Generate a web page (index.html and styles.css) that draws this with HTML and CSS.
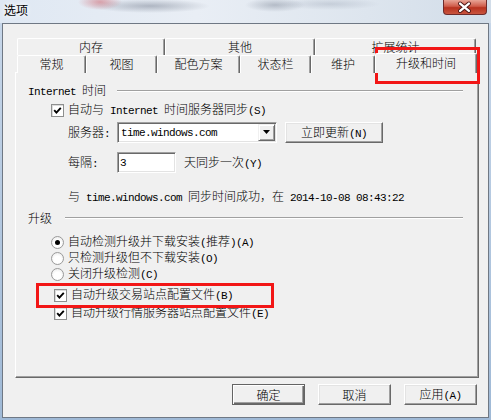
FILE: index.html
```html
<!DOCTYPE html>
<html lang="zh-CN">
<head>
    <meta charset="UTF-8">
    <title>选项</title>
    <link rel="stylesheet" href="styles.css">
</head>
<body>
<div class="window">
    <div class="titlebar">
        <span class="title">选项</span>
        <div class="close">
            <svg width="44" height="15" viewBox="0 0 44 15">
                <path d="M17.5 3.5 L26.5 11 M26.5 3.5 L17.5 11" stroke="#4a1414" stroke-width="4.2" stroke-linecap="round"/>
                <path d="M17.5 3.5 L26.5 11 M26.5 3.5 L17.5 11" stroke="#fff" stroke-width="2.4" stroke-linecap="round"/>
            </svg>
        </div>
    </div>

    <div class="frame">
        <div class="tabs">
            <div class="tabrow back">
                <div class="tab">内存</div>
                <div class="tab">其他</div>
                <div class="tab">扩展统计</div>
            </div>
            <div class="tabrow front">
                <div class="tab">常规</div>
                <div class="tab">视图</div>
                <div class="tab">配色方案</div>
                <div class="tab">状态栏</div>
                <div class="tab">维护</div>
                <div class="tab active">升级和时间</div>
            </div>
        </div>

        <div class="panel">
            <div class="group-head net">
                <span><span class="en">Internet </span>时间</span>
                <span class="rule"></span>
            </div>
            <div class="row sync-check">
                <span class="check"><svg width="11" height="11" viewBox="0 0 11 11"><path d="M2.2 5.2 L4.4 7.6 L8.8 2.8" fill="none" stroke="#000" stroke-width="1.9"/></svg></span>
                <span>自动与<span class="en"> Internet </span>时间服务器同步<span class="en">(S)</span></span>
            </div>
            <div class="row field server">
                <span class="field-label">服务器<span class="en">:</span></span>
                <div class="combo">
                    <span class="en combo-text">time.windows.com</span>
                    <span class="drop"><svg width="8" height="5" viewBox="0 0 8 5"><path d="M0 0 H7 L3.5 4 Z" fill="#000"/></svg></span>
                </div>
                <button class="btn update">立即更新<span class="en">(N)</span></button>
            </div>
            <div class="row field interval">
                <span class="field-label">每隔<span class="en">:</span></span>
                <div class="input"><span class="en">3</span></div>
                <span class="after">天同步一次<span class="en">(Y)</span></span>
            </div>
            <div class="row status">
                <span>与<span class="en"> time.windows.com </span>同步时间成功，在<span class="en"> 2014-10-08 08:43:22</span></span>
            </div>

            <div class="group-head up">
                <span>升级</span>
                <span class="rule"></span>
            </div>
            <div class="row opt first">
                <span class="radio on"></span>
                <span>自动检测升级并下载安装<span class="en">(</span>推荐<span class="en">)(A)</span></span>
            </div>
            <div class="row opt">
                <span class="radio"></span>
                <span>只检测升级但不下载安装<span class="en">(O)</span></span>
            </div>
            <div class="row opt">
                <span class="radio"></span>
                <span>关闭升级检测<span class="en">(C)</span></span>
            </div>
            <div class="row cfg first">
                <span class="check"><svg width="11" height="11" viewBox="0 0 11 11"><path d="M2.2 5.2 L4.4 7.6 L8.8 2.8" fill="none" stroke="#000" stroke-width="1.9"/></svg></span>
                <span>自动升级交易站点配置文件<span class="en">(B)</span></span>
            </div>
            <div class="row cfg second">
                <span class="check"><svg width="11" height="11" viewBox="0 0 11 11"><path d="M2.2 5.2 L4.4 7.6 L8.8 2.8" fill="none" stroke="#000" stroke-width="1.9"/></svg></span>
                <span>自动升级行情服务器站点配置文件<span class="en">(E)</span></span>
            </div>
        </div>

        <div class="footer">
            <button class="btn default">确定</button>
            <button class="btn">取消</button>
            <button class="btn">应用<span class="en">(A)</span></button>
        </div>

        <!-- red annotation boxes -->
        <div class="mark mark-tab"></div>
        <div class="mark mark-cfg"></div>
    </div>
</div>
</body>
</html>
```

FILE: styles.css
```css
* {
    box-sizing: border-box;
}
body {
    margin: 0;
    font: 300 12px/16px "Noto Sans CJK SC", "Liberation Sans", sans-serif;
    color: #000;
    background: #fff;
}
.en {
    font-family: "Liberation Mono", monospace;
    font-size: 11px;
    font-weight: 400;
    letter-spacing: -0.6px;
    white-space: pre;
}
.window {
    width: 491px;
    height: 420px;
    display: flex;
    flex-direction: column;
    overflow: hidden;
    background: linear-gradient(to bottom, #c9d8ea, #9fb9d6);
}
.titlebar {
    height: 23px;
    display: flex;
    justify-content: space-between;
    align-items: flex-start;
    padding: 0 4px;
    background:
        radial-gradient(ellipse 22px 8px at 100px 2px, rgba(200, 70, 80, 0.45), transparent),
        radial-gradient(ellipse 60px 7px at 150px 6px, rgba(70, 80, 100, 0.35), transparent),
        radial-gradient(ellipse 30px 7px at 275px 5px, rgba(70, 80, 100, 0.3), transparent),
        radial-gradient(ellipse 50px 6px at 330px 4px, rgba(120, 130, 150, 0.25), transparent),
        linear-gradient(to right, #dfe8f3, #e9eef5 40%, #dde5ee 75%, #d2dde9);
}
.title {
    line-height: 19px;
    font-weight: 400;
    text-shadow: 0 0 4px #fff, 0 0 6px #fff;
}
.close {
    width: 44px;
    height: 15px;
    border: 1px solid #6e2b2b;
    border-top: none;
    border-radius: 0 0 4px 4px;
    background: linear-gradient(to bottom, #e8a496, #cf5c4a 45%, #b8321f 55%, #c9553f);
    display: flex;
}
.close svg {
    margin-left: -1px;
}
.frame {
    position: relative;
    margin: 0 2px 2px 2px;
    height: 395px;
    border: 1px solid #6f7884;
    background: #f0f0f0;
}

/* tabs */
.tabs {
    margin: 14px 0 0 14px;
}
.tabrow {
    display: grid;
    height: 17px;
}
.tabrow.back {
    grid-template-columns: 148px 150px 161px;
}
.tabrow.front {
    grid-template-columns: 69px 71px 83px 71px 64px 102px;
}
.tab {
    border-top: 1px solid #fff;
    border-left: 1px solid #fff;
    border-right: 1px solid #696969;
    box-shadow: inset -1px 0 #a0a0a0;
    border-radius: 2px 2px 0 0;
    text-align: center;
    line-height: 16px;
    background: #f0f0f0;
}
.tab.active {
    position: relative;
    z-index: 1;
    margin-top: -2px;
    height: 20px;
    line-height: 17px;
}

/* panel */
.panel {
    margin-left: 12px;
    width: 464px;
    height: 306px;
    border: 1px solid;
    border-color: #fff #696969 #696969 #fff;
    box-shadow: inset -1px -1px #a0a0a0;
    padding-top: 10px;
}
.row {
    display: flex;
    align-items: center;
    height: 16px;
}
.group-head {
    display: flex;
    align-items: center;
    height: 16px;
    padding-left: 12px;
}
.group-head .rule {
    flex: 1;
    margin-right: 15px;
    border-top: 1px solid #a0a0a0;
    border-bottom: 1px solid #fff;
}
.group-head.net .rule {
    margin-left: 11px;
}
.group-head.up {
    margin-top: 5px;
}
.group-head.up .rule {
    margin-left: 13px;
}
.sync-check {
    margin-top: 3px;
    padding-left: 35px;
}
.field {
    height: 21px;
    padding-left: 52px;
}
.server {
    margin-top: 4px;
}
.interval {
    margin-top: 9px;
}
.field-label {
    width: 49px;
}
.combo {
    width: 160px;
    height: 21px;
    display: flex;
    align-items: center;
    border: 1px solid;
    border-color: #a0a0a0 #fff #fff #a0a0a0;
    box-shadow: inset 1px 1px #696969, inset -1px -1px #e3e3e3;
    background: #fff;
    padding-left: 3px;
}
.drop {
    margin: 1px 1px 1px auto;
    width: 17px;
    height: 17px;
    display: flex;
    align-items: center;
    justify-content: center;
    border: 1px solid;
    border-color: #f0f0f0 #696969 #696969 #f0f0f0;
    box-shadow: inset 1px 1px #fff, inset -1px -1px #a0a0a0;
    background: #f0f0f0;
}
.input {
    width: 59px;
    height: 21px;
    display: flex;
    align-items: center;
    border: 1px solid;
    border-color: #a0a0a0 #fff #fff #a0a0a0;
    box-shadow: inset 1px 1px #696969, inset -1px -1px #e3e3e3;
    background: #fff;
    padding-left: 2px;
}
.after {
    margin-left: 8px;
}
.status {
    margin-top: 16px;
    padding-left: 52px;
}
.opt {
    padding-left: 35px;
}
.opt.first {
    margin-top: 8px;
}
.cfg {
    padding-left: 38px;
}
.cfg.first {
    margin-top: 5px;
}
.cfg.second {
    margin-top: 2px;
}

/* controls */
.check {
    width: 13px;
    height: 13px;
    margin-right: 4px;
    border: 1px solid #8e8f8f;
    box-shadow: inset 1px 1px #dcdcdc;
    background: #fff;
    display: flex;
}
.radio {
    width: 13px;
    height: 13px;
    margin-right: 4px;
    border-radius: 50%;
    border: 1px solid #9a9a9a;
    background: radial-gradient(circle at 50% 60%, #fff 40%, #e4e4e4);
    display: flex;
    align-items: center;
    justify-content: center;
}
.radio.on::after {
    content: "";
    width: 5px;
    height: 5px;
    border-radius: 50%;
    background: #000;
}
.btn {
    height: 21px;
    padding: 0;
    font: inherit;
    color: #000;
    text-align: center;
    border: 1px solid;
    border-color: #fff #696969 #696969 #fff;
    box-shadow: inset -1px -1px #a0a0a0, inset 1px 1px #e3e3e3;
    background: #f0f0f0;
}
.btn.update {
    width: 98px;
    margin-left: 8px;
}
.btn.default {
    border-color: #646464;
    box-shadow: inset 1px 1px #fff, inset -1px -1px #696969, inset -2px -2px #a0a0a0;
}
.footer {
    display: flex;
    justify-content: flex-end;
    gap: 13px;
    margin-top: 6px;
    padding-right: 11px;
}
.footer .btn {
    width: 73px;
}

/* annotations drawn over the dialog */
.mark {
    position: absolute;
    border: 3px solid #f21616;
}
.mark-tab {
    left: 372px;
    top: 23px;
    width: 105px;
    height: 37px;
}
.mark-cfg {
    left: 33px;
    top: 259px;
    width: 238px;
    height: 25px;
}
```
